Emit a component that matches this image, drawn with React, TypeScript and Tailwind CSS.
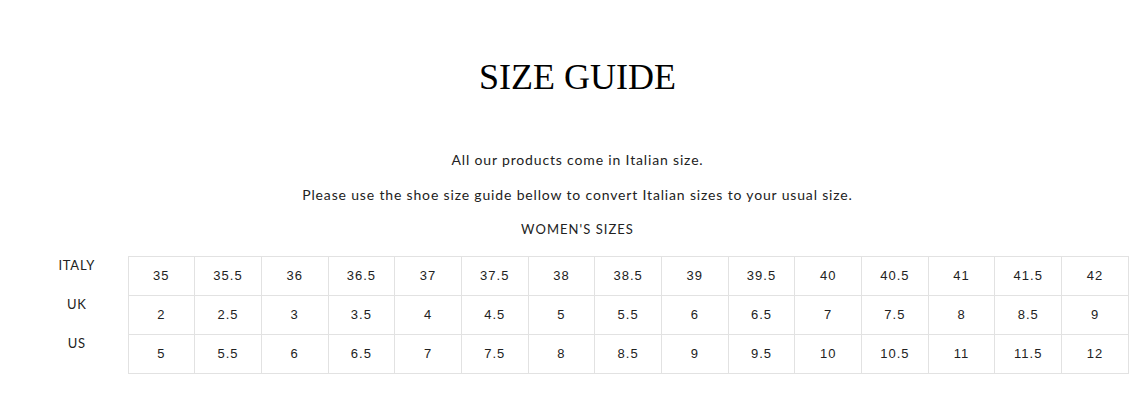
const italy = ["35", "35.5", "36", "36.5", "37", "37.5", "38", "38.5", "39", "39.5", "40", "40.5", "41", "41.5", "42"];
const uk = ["2", "2.5", "3", "3.5", "4", "4.5", "5", "5.5", "6", "6.5", "7", "7.5", "8", "8.5", "9"];
const us = ["5", "5.5", "6", "6.5", "7", "7.5", "8", "8.5", "9", "9.5", "10", "10.5", "11", "11.5", "12"];

const rows = [
    { label: "ITALY", values: italy },
    { label: "UK", values: uk },
    { label: "US", values: us },
];

function SizeTable(){
    return (
        <div className="flex mt-[9px]">
            <div className="w-[101.5px] shrink-0">
                {rows.map((row) => (
                    <div key={row.label} className="h-[39px] pt-[2px] text-center text-[13px] leading-[14px] tracking-[0.06em] text-[#222]">
                        {row.label}
                    </div>
                ))}
            </div>
            <div className="flex-1">
                <table className="w-full border-collapse table-fixed">
                    <tbody>
                        {rows.map((row) => (
                            <tr key={row.label}>
                                {row.values.map((v, i) => (
                                    <td key={i} className="h-[39px] p-0 border border-[#e2e2e2] text-center align-middle font-['Liberation_Sans',Arial,sans-serif] text-[13px] tracking-[0.08em] text-[#222]">
                                        {v}
                                    </td>
                                ))}
                            </tr>
                        ))}
                    </tbody>
                </table>
            </div>
        </div>
    );
}

function App(){
    return (
        <div className="w-full h-[411px] bg-white pl-[26px] pr-[6px] pt-[57px] font-['Lato','Noto_Sans',sans-serif] text-[#222]">
            <h1 className="text-center font-['Liberation_Serif','Times_New_Roman',serif] text-[36px] leading-[40px] text-black">SIZE GUIDE</h1>
            <div className="mt-[46px] text-center leading-[34.5px]">
                <p className="text-[14px] tracking-[0.06em]">All our products come in Italian size.</p>
                <p className="text-[14px] tracking-[0.06em]">Please use the shoe size guide bellow to convert Italian sizes to your usual size.</p>
                <p className="text-[13px] tracking-[0.08em]">WOMEN'S SIZES</p>
            </div>
            <SizeTable />
        </div>
    );
}

export default App;
